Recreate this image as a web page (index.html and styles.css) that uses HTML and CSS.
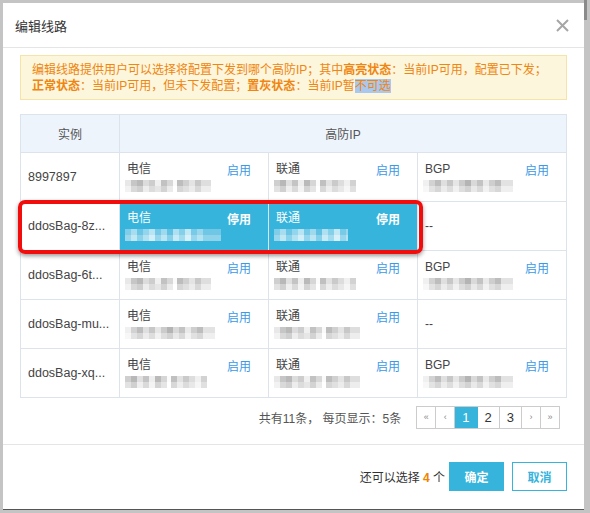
FILE: index.html
```html
<!DOCTYPE html>
<html lang="zh-CN">
<head>
    <meta charset="UTF-8">
    <title>编辑线路</title>
    <link rel="stylesheet" href="styles.css">
</head>
<body>
    <div class="window">
        <div class="dialog">
            <div class="dialog-header">
                <h3>编辑线路</h3>
                <span class="close">
                    <svg width="13" height="13" viewBox="0 0 13 13"><path d="M1 1L12 12M12 1L1 12" stroke="#a6a6a6" stroke-width="2"/></svg>
                </span>
            </div>

            <div class="dialog-body">
                <div class="alert">
                    编辑线路提供用户可以选择将配置下发到哪个高防IP；其中<b>高亮状态</b>：当前IP可用，配置已下发；<br>
                    <b>正常状态</b>：当前IP可用，但未下发配置；<b>置灰状态</b>：当前IP暂<span class="sel">不可选</span>
                </div>

                <div class="table-wrap">
                    <table class="lines">
                        <colgroup>
                            <col class="c-inst"><col class="c-ip"><col class="c-ip"><col class="c-ip">
                        </colgroup>
                        <thead>
                            <tr><th>实例</th><th colspan="3">高防IP</th></tr>
                        </thead>
                        <tbody>
                            <tr>
                                <td class="inst">8997897</td>
                                <td><div class="cell"><div><div class="isp">电信</div><div class="ip"></div></div><a class="op">启用</a></div></td>
                                <td><div class="cell"><div><div class="isp">联通</div><div class="ip ip-b"></div></div><a class="op">启用</a></div></td>
                                <td><div class="cell"><div><div class="isp">BGP</div><div class="ip ip-c"></div></div><a class="op">启用</a></div></td>
                            </tr>
                            <tr>
                                <td class="inst">ddosBag-8z...</td>
                                <td class="on"><div class="cell"><div><div class="isp">电信</div><div class="ip ip-on"></div></div><a class="op">停用</a></div></td>
                                <td class="on"><div class="cell"><div><div class="isp">联通</div><div class="ip ip-on ip-on2"></div></div><a class="op">停用</a></div></td>
                                <td class="none">--</td>
                            </tr>
                            <tr>
                                <td class="inst">ddosBag-6t...</td>
                                <td><div class="cell"><div><div class="isp">电信</div><div class="ip"></div></div><a class="op">启用</a></div></td>
                                <td><div class="cell"><div><div class="isp">联通</div><div class="ip ip-b"></div></div><a class="op">启用</a></div></td>
                                <td><div class="cell"><div><div class="isp">BGP</div><div class="ip ip-c"></div></div><a class="op">启用</a></div></td>
                            </tr>
                            <tr>
                                <td class="inst">ddosBag-mu...</td>
                                <td><div class="cell"><div><div class="isp">电信</div><div class="ip ip-c"></div></div><a class="op">启用</a></div></td>
                                <td><div class="cell"><div><div class="isp">联通</div><div class="ip"></div></div><a class="op">启用</a></div></td>
                                <td class="none">--</td>
                            </tr>
                            <tr>
                                <td class="inst">ddosBag-xq...</td>
                                <td><div class="cell"><div><div class="isp">电信</div><div class="ip ip-b"></div></div><a class="op">启用</a></div></td>
                                <td><div class="cell"><div><div class="isp">联通</div><div class="ip"></div></div><a class="op">启用</a></div></td>
                                <td><div class="cell"><div><div class="isp">BGP</div><div class="ip ip-c"></div></div><a class="op">启用</a></div></td>
                            </tr>
                        </tbody>
                    </table>
                    <div class="mark"></div>
                </div>

                <div class="pager">
                    <span class="total">共有11条， 每页显示：5条</span>
                    <ul class="pages">
                        <li class="arrow">«</li>
                        <li class="arrow">‹</li>
                        <li class="active">1</li>
                        <li>2</li>
                        <li>3</li>
                        <li class="arrow">›</li>
                        <li class="arrow">»</li>
                    </ul>
                </div>
            </div>

            <div class="dialog-footer">
                <span class="remain">还可以选择 <b>4</b> 个</span>
                <button class="btn btn-primary">确定</button>
                <button class="btn btn-default">取消</button>
            </div>
        </div>
        <div class="scrollbar"><div class="thumb"></div></div>
    </div>
</body>
</html>
```

FILE: styles.css
```css
body {
    margin: 0;
    padding: 3px 0 0 3px;
    background: #c4c4c4;
    font-family: "Liberation Sans", "Noto Sans CJK SC", sans-serif;
    font-size: 12px;
    color: #333;
}
.window {
    display: flex;
}
.dialog {
    width: 581px;
    height: 506px;
    background: #fff;
    border-bottom: 1px solid #555;
    display: flex;
    flex-direction: column;
}
.scrollbar {
    width: 6px;
    margin-top: -3px;
}
.scrollbar .thumb {
    width: 3px;
    height: 20px;
    margin-left: 0;
    background: #8a8a8a;
}

/* header */
.dialog-header {
    height: 44px;
    border-bottom: 1px solid #e5e5e5;
    display: flex;
    align-items: center;
    justify-content: space-between;
    padding: 0 15px 0 12px;
}
.dialog-header h3 {
    margin: 0;
    font-size: 13px;
    font-weight: normal;
    color: #333;
}
.close {
    display: flex;
    cursor: pointer;
}

/* body */
.dialog-body {
    padding: 7px 17px 15px;
}
.alert {
    background: #fcf6dc;
    border: 1px solid #f5e3a8;
    color: #f0850f;
    padding: 6px 11px 5px;
    line-height: 16px;
}
.alert b {
    font-weight: bold;
}
.alert .sel {
    background: #a9c8ef;
}

.table-wrap {
    position: relative;
    margin-top: 14px;
}
.lines {
    width: 547px;
    border-collapse: collapse;
    table-layout: fixed;
}
.c-inst {
    width: 99px;
}
.c-ip {
    width: 149px;
}
.lines th, .lines td {
    border: 1px solid #dde3ea;
    padding: 0;
}
.lines th {
    height: 37px;
    background: #eef4fc;
    font-weight: normal;
    color: #555;
}
.lines td {
    height: 48px;
    vertical-align: top;
}
.lines td.inst, .lines td.none {
    vertical-align: middle;
    padding-left: 7px;
    color: #444;
}
.lines td.inst {
    font-size: 12.5px;
}
.cell {
    display: flex;
    justify-content: space-between;
    padding: 9px 17px 0 7px;
}
.isp {
    line-height: 14px;
    color: #444;
}
.op {
    color: #3b9ae8;
    margin-top: 2px;
    line-height: 14px;
    cursor: pointer;
}
.lines td.on {
    background: #36b4dc;
}
.lines td.on .isp, .lines td.on .op {
    color: #fff;
}
.lines td.on .op {
    font-weight: bold;
}

/* mosaic over ip addresses */
.ip {
    width: 86px;
    height: 12px;
    margin: 4px 0 0 -2px;
    background:
        linear-gradient(90deg, #e8e8e8 0 6px, #c6c6c6 6px 12px, #b9b9b9 12px 18px, #dcdcdc 18px 24px, #cdcdcd 24px 30px, #f0f0f0 30px 36px, #c2c2c2 36px 42px, #d8d8d8 42px 48px, #fafafa 48px 52px, #bdbdbd 52px 58px, #d0d0d0 58px 64px, #e4e4e4 64px 70px, #c8c8c8 70px 76px, #dedede 76px 86px) top / 100% 6px no-repeat,
        linear-gradient(90deg, #f2f2f2 0 6px, #d9d9d9 6px 12px, #cfcfcf 12px 18px, #ededed 18px 24px, #dcdcdc 24px 30px, #e6e6e6 30px 36px, #d3d3d3 36px 42px, #ebebeb 42px 48px, #ffffff 48px 52px, #d6d6d6 52px 58px, #e0e0e0 58px 64px, #ececec 64px 70px, #d8d8d8 70px 76px, #ededed 76px 86px) bottom / 100% 6px no-repeat;
}
.ip-b {
    width: 82px;
    background:
        linear-gradient(90deg, #cfcfcf 0 6px, #b8b8b8 6px 12px, #e0e0e0 12px 18px, #c4c4c4 18px 24px, #eeeeee 24px 30px, #bababa 30px 36px, #d6d6d6 36px 42px, #fbfbfb 42px 46px, #c0c0c0 46px 52px, #e2e2e2 52px 58px, #cacaca 58px 64px, #dddddd 64px 70px, #f0f0f0 70px 76px, #d2d2d2 76px 82px) top / 100% 6px no-repeat,
        linear-gradient(90deg, #e2e2e2 0 6px, #d0d0d0 6px 12px, #efefef 12px 18px, #dadada 18px 24px, #f4f4f4 24px 30px, #d4d4d4 30px 36px, #e5e5e5 36px 42px, #ffffff 42px 46px, #d8d8d8 46px 52px, #eeeeee 52px 58px, #dcdcdc 58px 64px, #e8e8e8 64px 70px, #f6f6f6 70px 76px, #e0e0e0 76px 82px) bottom / 100% 6px no-repeat;
}
.ip-c {
    width: 90px;
    background:
        linear-gradient(90deg, #f0f0f0 0 6px, #d2d2d2 6px 12px, #bdbdbd 12px 18px, #dfdfdf 18px 24px, #c7c7c7 24px 30px, #e6e6e6 30px 36px, #cbcbcb 36px 42px, #b4b4b4 42px 48px, #d9d9d9 48px 54px, #c3c3c3 54px 60px, #e9e9e9 60px 66px, #cecece 66px 72px, #bdbdbd 72px 78px, #e2e2e2 78px 90px) top / 100% 6px no-repeat,
        linear-gradient(90deg, #f7f7f7 0 6px, #e3e3e3 6px 12px, #d6d6d6 12px 18px, #ececec 18px 24px, #dddddd 24px 30px, #f1f1f1 30px 36px, #dedede 36px 42px, #d2d2d2 42px 48px, #e9e9e9 48px 54px, #d9d9d9 54px 60px, #f2f2f2 60px 66px, #e1e1e1 66px 72px, #d7d7d7 72px 78px, #efefef 78px 90px) bottom / 100% 6px no-repeat;
}
.ip-on {
    width: 96px;
    background:
        linear-gradient(90deg, #7fcde8 0 6px, #a8ddef 6px 12px, #6cc5e4 12px 18px, #93d5ec 18px 24px, #b9e4f3 24px 30px, #76c9e6 30px 36px, #9fd9ee 36px 42px, #62c1e2 42px 48px, #aee0f1 48px 54px, #85cfe9 54px 60px, #c3e8f5 60px 66px, #78cae7 66px 72px, #9ad7ed 72px 78px, #6fc7e5 78px 96px) top / 100% 6px no-repeat,
        linear-gradient(90deg, #9ad7ed 0 6px, #c0e7f4 6px 12px, #8ad1ea 12px 18px, #b2e1f2 18px 24px, #d2eef8 24px 30px, #96d5ec 30px 36px, #bce5f3 36px 42px, #85cfe9 42px 48px, #c8eaf6 48px 54px, #a2daee 54px 60px, #d8f0f9 60px 66px, #97d6ec 66px 72px, #b6e3f2 72px 78px, #8fd3eb 78px 96px) bottom / 100% 6px no-repeat;
}
.ip-on2 {
    width: 74px;
}

/* annotation box around the highlighted row */
.mark {
    position: absolute;
    left: -2px;
    top: 86px;
    width: 397px;
    height: 46px;
    border: 4px solid #f20d0d;
    border-radius: 7px;
    box-shadow: 0 2px 4px rgba(0, 0, 0, 0.4);
    pointer-events: none;
}

/* pagination */
.pager {
    margin-top: 8px;
    display: flex;
    justify-content: flex-end;
    align-items: center;
    gap: 15px;
    padding-right: 7px;
}
.total {
    color: #555;
}
.pages {
    list-style: none;
    margin: 0;
    padding: 0;
    display: flex;
    border: 1px solid #ccc;
    border-right: none;
    height: 21px;
}
.pages li {
    min-width: 22px;
    box-sizing: border-box;
    padding: 0 7px;
    border-right: 1px solid #ccc;
    line-height: 21px;
    text-align: center;
    font-size: 13px;
    color: #333;
    cursor: pointer;
}
.pages li.arrow {
    font-size: 9px;
    color: #888;
    min-width: 19px;
    padding: 0 5px;
}
.pages li.active {
    background: #36b4dc;
    border-color: #36b4dc;
    color: #fff;
}

/* footer */
.dialog-footer {
    margin-top: auto;
    border-top: 1px solid #e5e5e5;
    padding: 17px 17px 18px;
    display: flex;
    justify-content: flex-end;
    align-items: center;
}
.remain {
    margin-right: 4px;
}
.remain b {
    color: #f08300;
}
.btn {
    width: 55px;
    height: 29px;
    font-family: inherit;
    font-size: 12px;
    font-weight: bold;
    cursor: pointer;
    padding: 0;
}
.btn-primary {
    background: #36b4dc;
    border: none;
    color: #fff;
}
.btn-default {
    margin-left: 8px;
    background: #fff;
    border: 1px solid #36b4dc;
    color: #36b4dc;
}
```
